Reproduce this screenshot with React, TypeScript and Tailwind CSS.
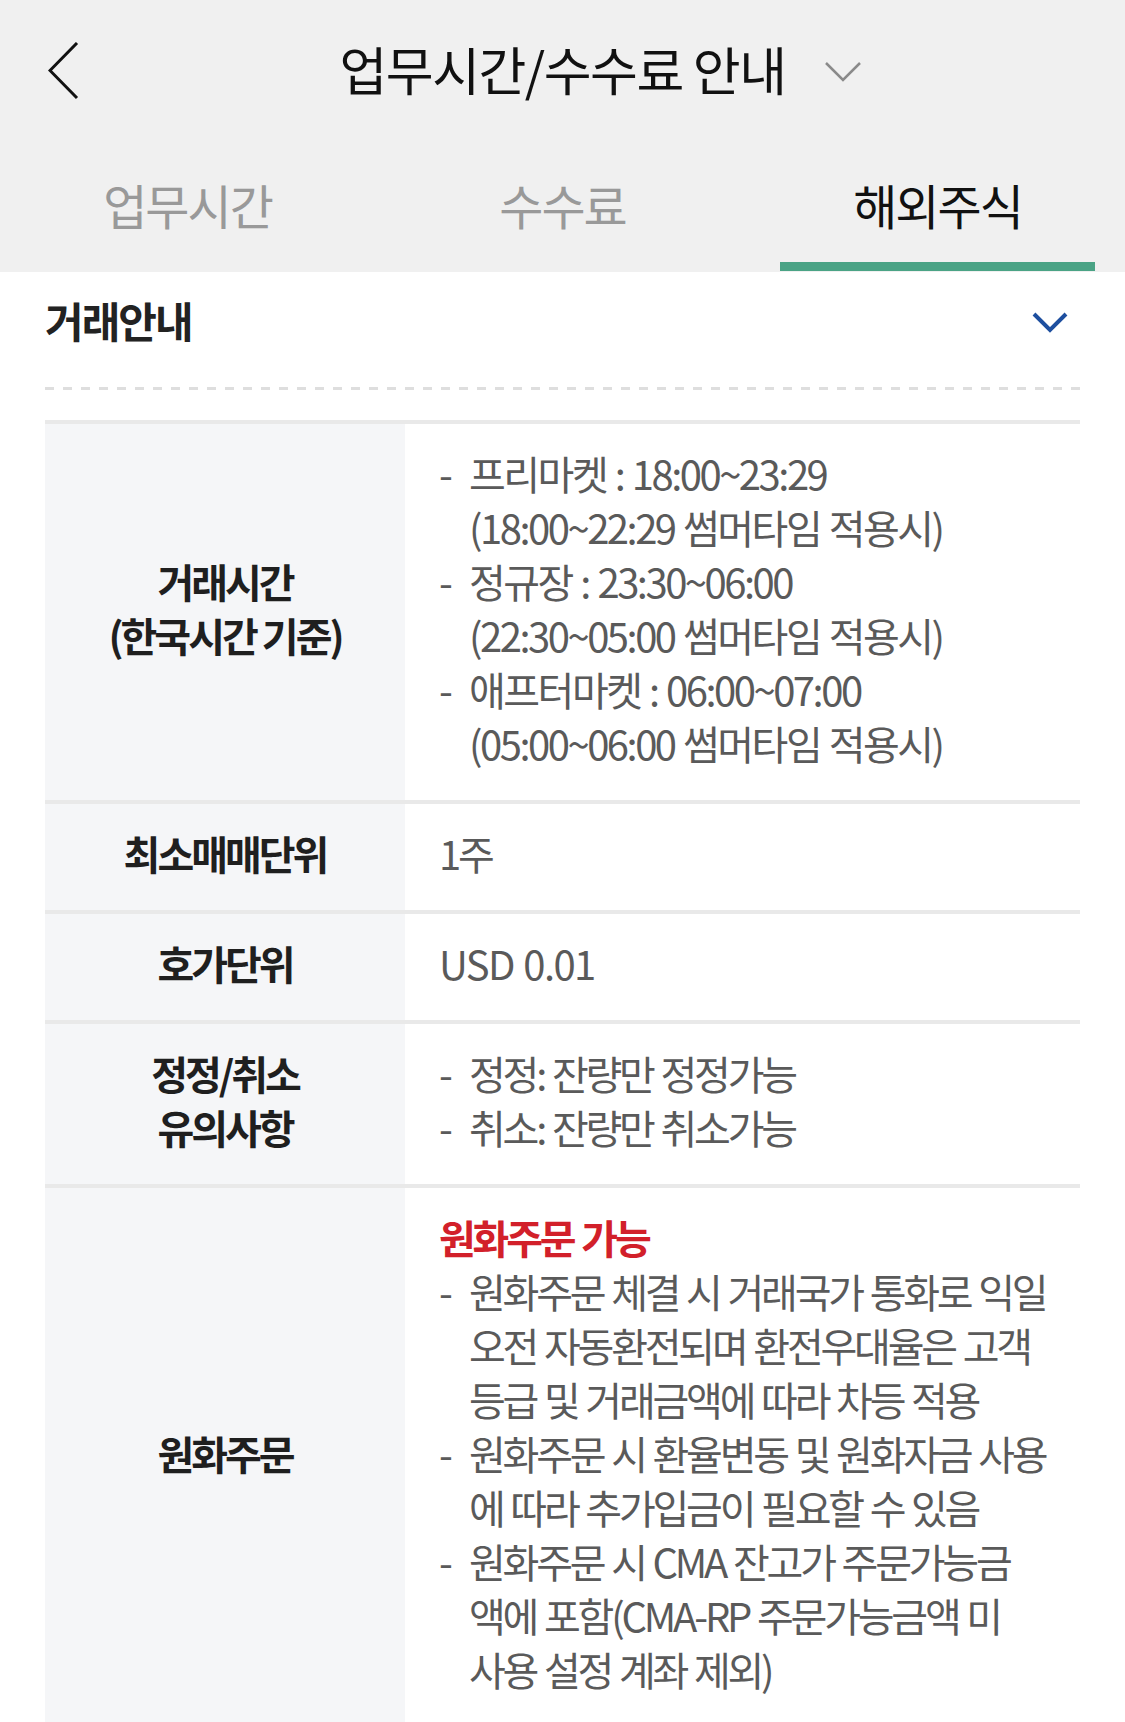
import React from "react";

const Dash = ({ children, tight = "" }: { children: React.ReactNode; tight?: string }) => (
  <div className={`flex whitespace-nowrap ${tight}`}>
    <span className="w-[30px] shrink-0">-</span>
    <span>{children}</span>
  </div>
);

const Line = ({ children, tight = "" }: { children: React.ReactNode; tight?: string }) => (
  <div className={`whitespace-nowrap pl-[30px] ${tight}`}>{children}</div>
);

const Row = ({ label, children }: { label: React.ReactNode; children: React.ReactNode }) => (
  <div className="flex border-t-4 border-[#e9e9e9]">
    <div className="flex w-[360px] shrink-0 items-center justify-center bg-[#f5f6f8] pb-[8px] text-center text-[40px] leading-[54px] font-bold tracking-[-3px] text-[#1f1f1f]">
      <div>{label}</div>
    </div>
    <div className="flex-1 pt-[22px] pb-[30px] pl-[34px] text-[40px] leading-[54px] tracking-[-3.2px] text-[#5a5a5a] [word-spacing:2px]">
      {children}
    </div>
  </div>
);

const App = () => {
  const tabs = [
    { name: "업무시간", active: false },
    { name: "수수료", active: false },
    { name: "해외주식", active: true },
  ];

  return (
    <div className="min-h-screen w-full bg-white font-['Noto_Sans_CJK_KR',sans-serif]">
      {/* header */}
      <div className="bg-[#f0f0f0]">
        <div className="grid h-[142px] grid-cols-[1fr_auto_1fr] items-center">
          <div className="pl-[48px]">
            <svg width="32" height="58" viewBox="0 0 32 58" fill="none">
              <path d="M29 1 L2 28.5 L29 56" stroke="#111" strokeWidth="3" />
            </svg>
          </div>
          <h1 className="pb-[4px] text-[52px] font-normal tracking-[-1.5px] text-[#111]">업무시간/수수료 안내</h1>
          <div className="pl-[38px]">
            <svg width="38" height="22" viewBox="0 0 38 22" fill="none">
              <path d="M2 3 L19 20 L36 3" stroke="#8a8a8a" strokeWidth="2.5" />
            </svg>
          </div>
        </div>
        <div className="grid h-[130px] grid-cols-3">
          {tabs.map(tab => (
            <div key={tab.name} className="flex flex-col">
              <div
                className={`flex flex-1 items-center justify-center pt-[4px] text-[48px] tracking-[-2px] ${
                  tab.active ? "text-[#111]" : "text-[#999]"
                }`}
              >
                {tab.name}
              </div>
              <div className={`mx-[30px] mb-[1px] h-[9px] ${tab.active ? "bg-[#4aa385]" : ""}`} />
            </div>
          ))}
        </div>
      </div>

      {/* content */}
      <div className="px-[45px]">
        <div className="flex h-[100px] items-center justify-between">
          <h2 className="pb-[6px] text-[42px] font-bold tracking-[-2px] text-[#222]">거래안내</h2>
          <svg className="mr-[12px]" width="36" height="22" viewBox="0 0 36 22" fill="none">
            <path d="M2 3 L18 19 L34 3" stroke="#1e4f9f" strokeWidth="4" />
          </svg>
        </div>
        <div className="mt-[15px] h-[3px] bg-[repeating-linear-gradient(90deg,#dedede_0_9px,transparent_9px_18px)]" />

        <div className="mt-[30px]">
          <Row
            label={
              <>
                거래시간
                <br />
                (한국시간 기준)
              </>
            }
          >
            <Dash tight="tracking-[-2.5px]">프리마켓 : 18:00~23:29</Dash>
            <Line tight="tracking-[-2.5px]">(18:00~22:29 썸머타임 적용시)</Line>
            <Dash tight="tracking-[-2.5px]">정규장 : 23:30~06:00</Dash>
            <Line tight="tracking-[-2.5px]">(22:30~05:00 썸머타임 적용시)</Line>
            <Dash tight="tracking-[-2.5px]">애프터마켓 : 06:00~07:00</Dash>
            <Line tight="tracking-[-2.5px]">(05:00~06:00 썸머타임 적용시)</Line>
          </Row>
          <Row label="최소매매단위">
            <div>1주</div>
          </Row>
          <Row label="호가단위">
            <div className="tracking-[-1.6px]">USD 0.01</div>
          </Row>
          <Row
            label={
              <>
                정정/취소
                <br />
                유의사항
              </>
            }
          >
            <Dash>정정: 잔량만 정정가능</Dash>
            <Dash>취소: 잔량만 취소가능</Dash>
          </Row>
          <Row label="원화주문">
            <div className="font-bold text-[#d2202a]">원화주문 가능</div>
            <Dash>원화주문 체결 시 거래국가 통화로 익일</Dash>
            <Line>오전 자동환전되며 환전우대율은 고객</Line>
            <Line>등급 및 거래금액에 따라 차등 적용</Line>
            <Dash>원화주문 시 환율변동 및 원화자금 사용</Dash>
            <Line>에 따라 추가입금이 필요할 수 있음</Line>
            <Dash>원화주문 시 CMA 잔고가 주문가능금</Dash>
            <Line>액에 포함(CMA-RP 주문가능금액 미</Line>
            <Line>사용 설정 계좌 제외)</Line>
          </Row>
        </div>
      </div>
    </div>
  );
};

export default App;
